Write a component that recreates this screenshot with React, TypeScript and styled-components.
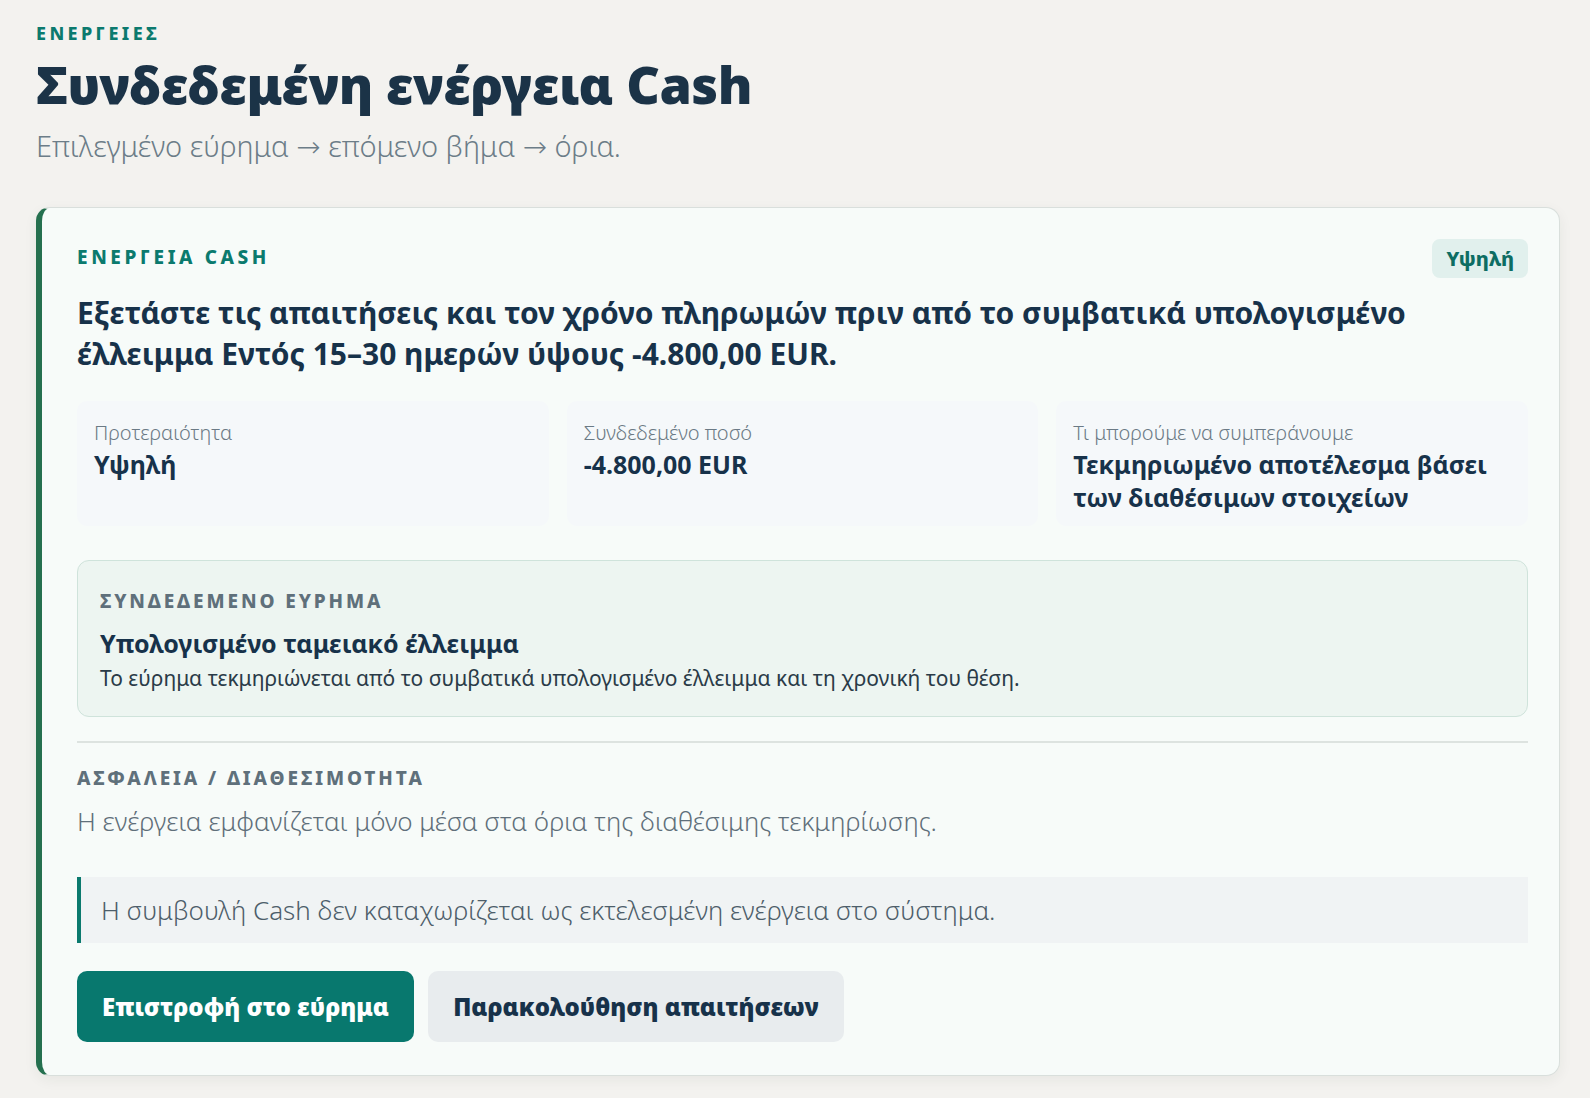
import React from 'react';
import styled, { createGlobalStyle } from 'styled-components';

const GlobalStyle = createGlobalStyle`
  html, body {
    margin: 0;
    padding: 0;
    background: #f3f2ef;
  }
  body {
    font-family: "Noto Sans", "Open Sans", "DejaVu Sans", sans-serif;
    color: #17324a;
  }
  * { box-sizing: border-box; }
`;

const Page = styled.main`
  padding: 21px 30px 24px 36px;
`;

const Eyebrow = styled.div`
  font-size: 18px;
  font-weight: 800;
  letter-spacing: 3.4px;
  color: #0b7a6e;
  text-transform: uppercase;
  line-height: 24px;
`;

const Title = styled.h1`
  margin: 8px 0 0;
  font-size: 52px;
  font-weight: 900;
  line-height: 62px;
  letter-spacing: -0.5px;
  color: #1b3347;
`;

const Subtitle = styled.p`
  margin: 11px 0 0;
  font-size: 29px;
  font-weight: 300;
  line-height: 40px;
  color: #6c7d88;
`;

const Card = styled.section`
  margin-top: 41px;
  background: #f7fbf9;
  border: 1px solid #d9dfdc;
  border-left: 6px solid #25704f;
  border-radius: 14px;
  box-shadow: 0 4px 14px rgba(30, 50, 40, 0.06);
  padding: 31px 31px 33px 35px;
`;

const CardHead = styled.div`
  display: flex;
  justify-content: space-between;
  align-items: flex-start;
`;

const CardLabel = styled(Eyebrow)`
  margin-top: 6px;
  font-size: 19px;
  letter-spacing: 3.6px;
`;

const Badge = styled.span`
  background: #e1f0ed;
  color: #0d6d63;
  font-weight: 800;
  font-size: 20px;
  padding: 6px 14px;
  border-radius: 8px;
  line-height: 27px;
`;

const Lead = styled.p`
  margin: 14px 0 0;
  font-size: 30px;
  font-weight: 700;
  line-height: 41px;
  color: #17324a;
`;

const Metrics = styled.div`
  margin-top: 27px;
  display: grid;
  grid-template-columns: 1fr 1fr 1fr;
  gap: 18px;
`;

const Metric = styled.div`
  background: #f5f8fa;
  border-radius: 10px;
  padding: 18px 17px 12px;
  min-height: 125px;
`;

const MetricLabel = styled.div`
  font-size: 20px;
  line-height: 28px;
  font-weight: 300;
  color: #6b7a85;
`;

const MetricValue = styled.div`
  margin-top: 1px;
  font-size: 25px;
  line-height: 33px;
  font-weight: 700;
  color: #17324a;
`;

const Finding = styled.div`
  margin-top: 34px;
  background: #edf5f1;
  border: 1.5px solid #cfe3db;
  border-radius: 12px;
  padding: 28px 22px 23px;
`;

const SectionLabel = styled.div`
  font-size: 19px;
  font-weight: 800;
  letter-spacing: 2.9px;
  color: #5f707b;
  text-transform: uppercase;
  line-height: 24px;
`;

const FindingTitle = styled.div`
  margin-top: 14px;
  font-size: 25px;
  font-weight: 700;
  line-height: 32px;
  color: #17324a;
`;

const FindingText = styled.div`
  margin-top: 4px;
  font-size: 21px;
  line-height: 30px;
  color: #2a3b48;
`;

const Divider = styled.hr`
  margin: 24px 0 0;
  border: 0;
  border-top: 2px solid #dde3e0;
`;

const Safety = styled.div`
  margin-top: 23px;
`;

const SafetyText = styled.p`
  margin: 13px 0 0;
  font-size: 26px;
  line-height: 36px;
  font-weight: 300;
  color: #5f6f7a;
`;

const Note = styled.div`
  margin-top: 38px;
  background: #f0f3f4;
  border-left: 4px solid #0b7a6e;
  padding: 15px 20px 15px 20px;
  font-size: 26px;
  line-height: 36px;
  font-weight: 300;
  color: #4d5e6a;
`;

const Actions = styled.div`
  margin-top: 28px;
  display: flex;
  gap: 14px;
`;

const Button = styled.button<{ $primary?: boolean }>`
  font-family: inherit;
  font-size: 24px;
  font-weight: 900;
  height: 71px;
  padding: 0 25px;
  border: 0;
  border-radius: 10px;
  cursor: pointer;
  background: ${(p) => (p.$primary ? '#08786e' : '#e8ecee')};
  color: ${(p) => (p.$primary ? '#ffffff' : '#17324a')};
`;

const metrics = [
  { label: 'Προτεραιότητα', value: 'Υψηλή' },
  { label: 'Συνδεδεμένο ποσό', value: '-4.800,00 EUR' },
  { label: 'Τι μπορούμε να συμπεράνουμε', value: 'Τεκμηριωμένο αποτέλεσμα βάσει των διαθέσιμων στοιχείων' },
];

const App: React.FC = () => {
  return (
    <>
      <GlobalStyle />
      <Page>
        <Eyebrow>Ενεργειες</Eyebrow>
        <Title>Συνδεδεμένη ενέργεια Cash</Title>
        <Subtitle>Επιλεγμένο εύρημα → επόμενο βήμα → όρια.</Subtitle>

        <Card>
          <CardHead>
            <CardLabel>Ενεργεια Cash</CardLabel>
            <Badge>Υψηλή</Badge>
          </CardHead>
          <Lead>
            Εξετάστε τις απαιτήσεις και τον χρόνο πληρωμών πριν από το συμβατικά υπολογισμένο
            έλλειμμα Εντός 15–30 ημερών ύψους -4.800,00 EUR.
          </Lead>

          <Metrics>
            {metrics.map((m) => (
              <Metric key={m.label}>
                <MetricLabel>{m.label}</MetricLabel>
                <MetricValue>{m.value}</MetricValue>
              </Metric>
            ))}
          </Metrics>

          <Finding>
            <SectionLabel>Συνδεδεμενο ευρημα</SectionLabel>
            <FindingTitle>Υπολογισμένο ταμειακό έλλειμμα</FindingTitle>
            <FindingText>
              Το εύρημα τεκμηριώνεται από το συμβατικά υπολογισμένο έλλειμμα και τη χρονική του θέση.
            </FindingText>
          </Finding>

          <Divider />

          <Safety>
            <SectionLabel>Ασφαλεια / Διαθεσιμοτητα</SectionLabel>
            <SafetyText>Η ενέργεια εμφανίζεται μόνο μέσα στα όρια της διαθέσιμης τεκμηρίωσης.</SafetyText>
          </Safety>

          <Note>Η συμβουλή Cash δεν καταχωρίζεται ως εκτελεσμένη ενέργεια στο σύστημα.</Note>

          <Actions>
            <Button $primary>Επιστροφή στο εύρημα</Button>
            <Button>Παρακολούθηση απαιτήσεων</Button>
          </Actions>
        </Card>
      </Page>
    </>
  );
};

export default App;
